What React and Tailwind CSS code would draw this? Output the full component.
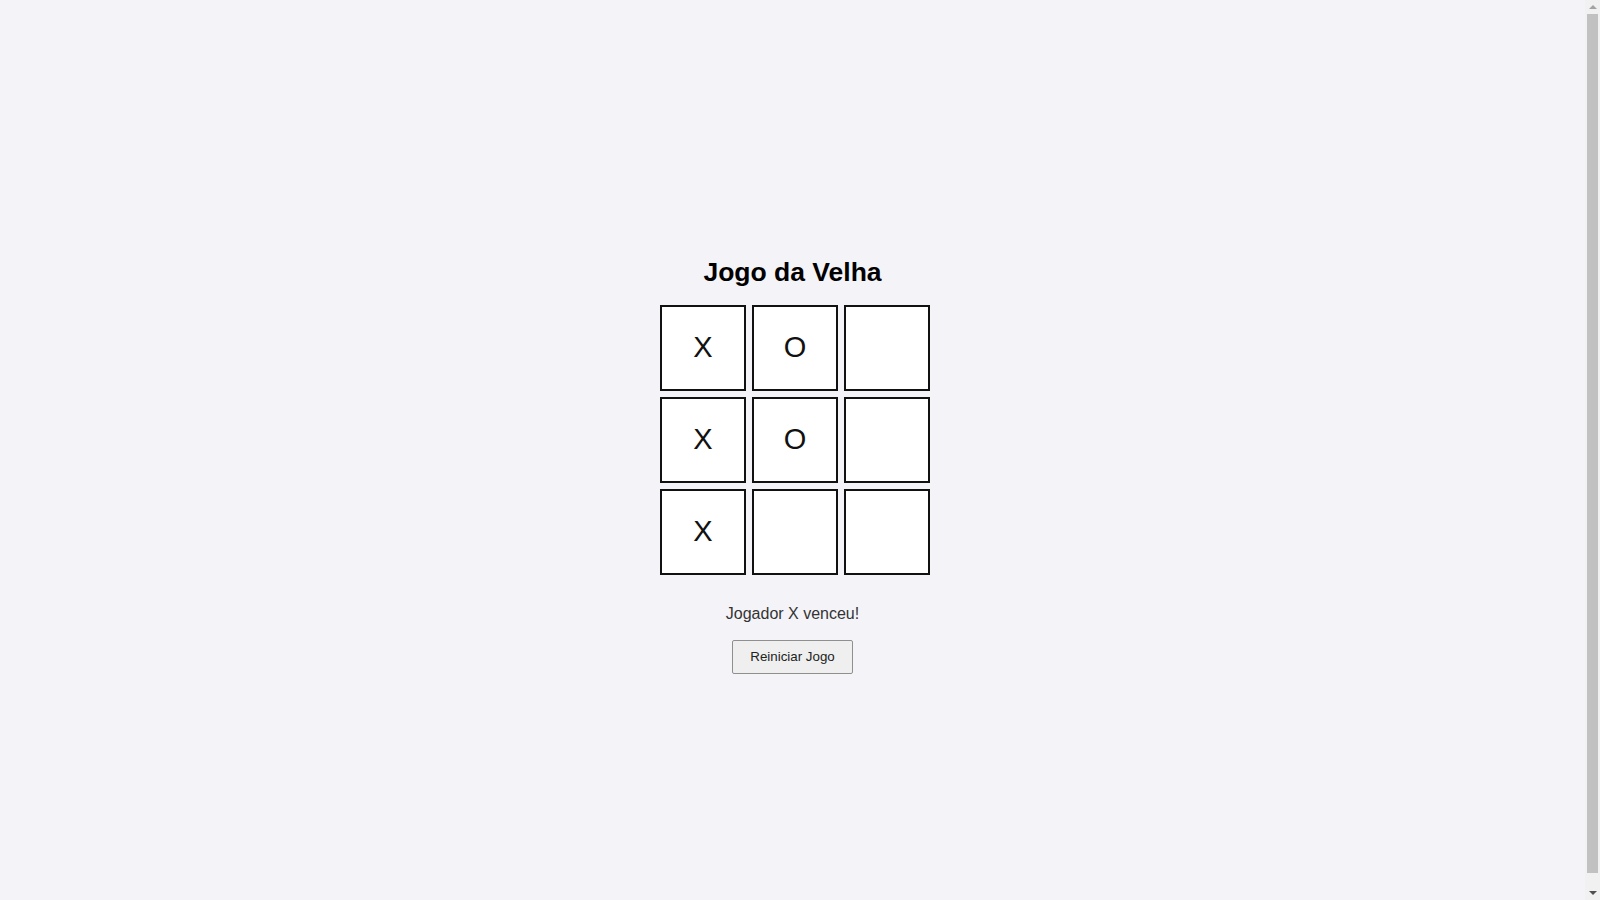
import React, { useState } from 'react';

const lines = [
  [0, 1, 2], [3, 4, 5], [6, 7, 8],
  [0, 3, 6], [1, 4, 7], [2, 5, 8],
  [0, 4, 8], [2, 4, 6],
];

function getWinner(squares) {
  for (const [a, b, c] of lines) {
    if (squares[a] && squares[a] === squares[b] && squares[a] === squares[c]) return squares[a];
  }
  return null;
}

const initialBoard = ['X', 'O', null, 'X', 'O', null, 'X', null, null];

// looks like the browser's classic scrollbar
function ScrollStrip() {
  return (
    <div className="w-[15px] h-screen shrink-0 bg-[#f1f1f1] flex flex-col items-center">
      <div className="h-[14px] flex items-center justify-center">
        <div className="w-0 h-0 border-x-[4px] border-x-transparent border-b-[4px] border-b-[#a3a3a3]" />
      </div>
      <div className="w-[11px] flex-1 bg-[#c1c1c1]" />
      <div className="h-[27px] flex items-center justify-center pt-[13px]">
        <div className="w-0 h-0 border-x-[4px] border-x-transparent border-t-[4px] border-t-[#505050]" />
      </div>
    </div>
  );
}

export default function App() {
  const [squares, setSquares] = useState(initialBoard);
  const [xNext, setXNext] = useState(false);

  const winner = getWinner(squares);
  const isDraw = !winner && squares.every(Boolean);

  const handleClick = (i) => {
    if (squares[i] || winner) return;
    const next = squares.slice();
    next[i] = xNext ? 'X' : 'O';
    setSquares(next);
    setXNext(!xNext);
  };

  const reset = () => {
    setSquares(Array(9).fill(null));
    setXNext(true);
  };

  let status;
  if (winner) status = `Jogador ${winner} venceu!`;
  else if (isDraw) status = 'Empate!';
  else status = `Vez do jogador ${xNext ? 'X' : 'O'}`;

  return (
    <div className="h-screen flex bg-[#f4f4f8] overflow-hidden">
      <div className="flex-1 h-[914px] pt-[15px] flex flex-col items-center justify-center font-['Liberation_Sans',Arial,sans-serif]">
        <h1 className="text-[26.5px] leading-[32px] font-bold text-black">Jogo da Velha</h1>
        <div className="mt-[17px] ml-[5px] grid grid-cols-[repeat(3,86px)] gap-[6px]">
          {squares.map((value, i) => (
            <button
              key={i}
              onClick={() => handleClick(i)}
              className="w-[86px] h-[86px] bg-white border-2 border-[#111] flex items-center justify-center text-[29px] text-[#111] cursor-pointer"
            >
              {value}
            </button>
          ))}
        </div>
        <p className="mt-[27px] text-base leading-6 text-[#333]">{status}</p>
        <button
          onClick={reset}
          className="mt-[14px] w-[121px] h-[34px] bg-[#efefef] border border-[#8f8f8f] rounded-[2px] text-[13.33px] text-[#222] cursor-pointer"
        >
          Reiniciar Jogo
        </button>
      </div>
      <ScrollStrip />
    </div>
  );
}
